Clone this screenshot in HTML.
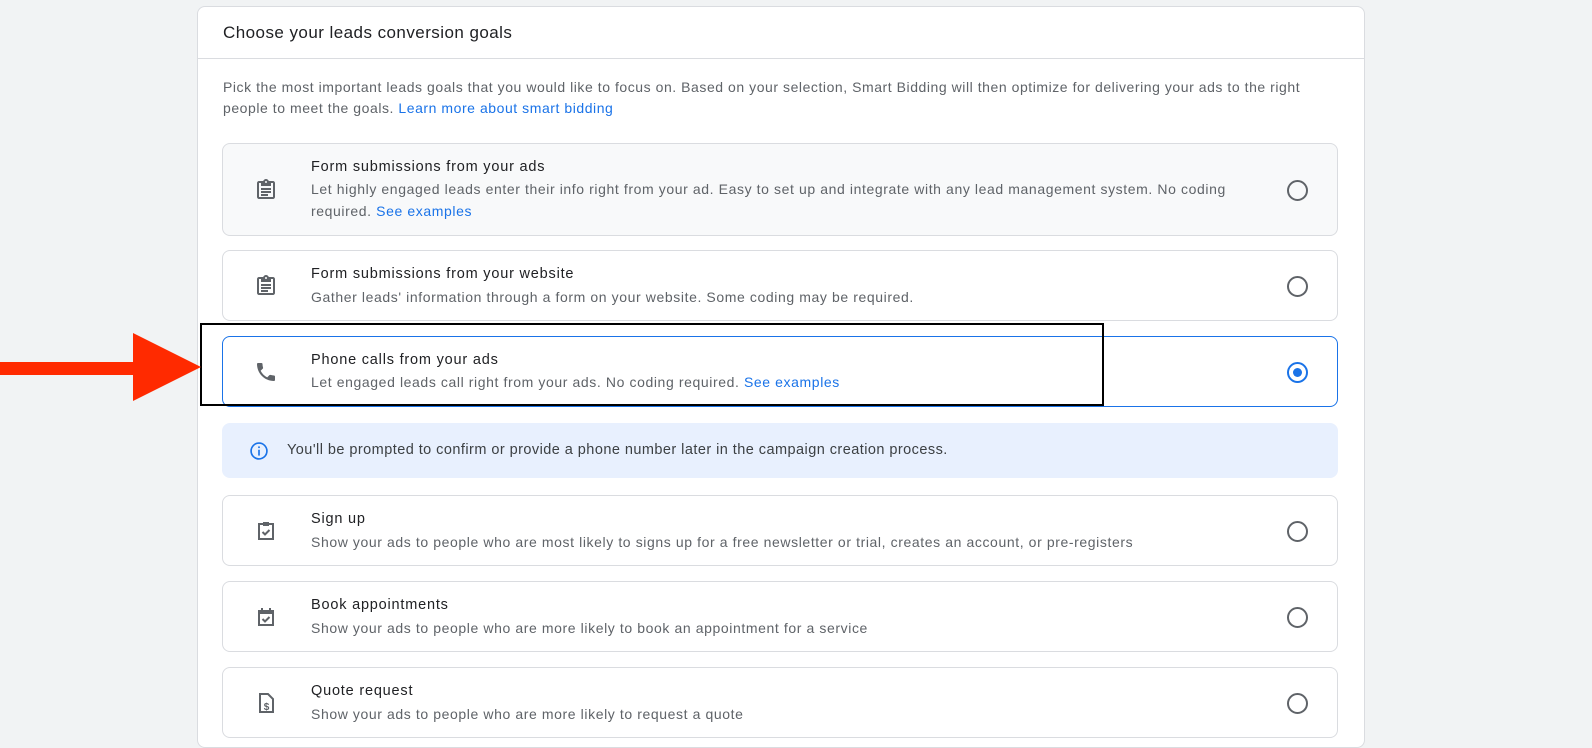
<!DOCTYPE html><html><head><style>
body{margin:0;width:1592px;height:723px;background:#f1f3f4;font-family:"Liberation Sans",Arial,sans-serif;position:relative;overflow:hidden}
.card{position:absolute;left:197px;top:6px;width:1166px;height:740px;background:#fff;border:1px solid #dadce0;border-radius:8px}
.hd{height:51px;border-bottom:1px solid #dadce0;font-size:17px;letter-spacing:0.45px;color:#202124;padding-left:25px;line-height:52px}
.intro{position:absolute;left:25px;top:70px;width:1110px;font-size:14px;letter-spacing:0.55px;line-height:21px;color:#5f6368}
a{color:#1a73e8}
.opt{position:absolute;left:222px;width:1114px;border:1px solid #dadce0;border-radius:8px;background:#fff}
.opt .ic{position:absolute;left:31px;top:50%;margin-top:-12px;width:24px;height:24px}
.opt .t{position:absolute;left:88px;font-size:14.5px;letter-spacing:0.8px;color:#202124}
.opt .d{position:absolute;left:88px;font-size:14px;letter-spacing:0.6px;color:#5f6368;line-height:22px;width:940px}
.rad{position:absolute;right:29px;top:50%;margin-top:-10px;width:17px;height:17px;border:2px solid #5f6368;border-radius:50%}
.lk{color:#1a73e8}
</style></head><body>
<div class="card"><div class="hd">Choose your leads conversion goals</div>
<div class="intro">Pick the most important leads goals that you would like to focus on. Based on your selection, Smart Bidding will then optimize for delivering your ads to the right people to meet the goals. <a>Learn more about smart bidding</a></div></div>

<div class="opt" style="top:143px;height:91px;background:#f8f9fa">
<svg class="ic" viewBox="0 0 24 24"><path fill="#5f6368" d="M19 3h-4.18C14.4 1.84 13.3 1 12 1s-2.4.84-2.82 2H5c-1.1 0-2 .9-2 2v14c0 1.1.9 2 2 2h14c1.1 0 2-.9 2-2V5c0-1.1-.9-2-2-2zm-7 0c.55 0 1 .45 1 1s-.45 1-1 1-1-.45-1-1 .45-1 1-1zm7 16H5V5h2v3h10V5h2v14zM7 10h10v2H7zm0 3h10v2H7zm0 3h7v2H7z"/></svg>
<div class="t" style="top:15px">Form submissions from your ads</div>
<div class="d" style="top:34px">Let highly engaged leads enter their info right from your ad. Easy to set up and integrate with any lead management system. No coding required. <span class="lk">See examples</span></div><div class="rad"></div></div>

<div class="opt" style="top:250px;height:69px">
<svg class="ic" viewBox="0 0 24 24"><path fill="#5f6368" d="M19 3h-4.18C14.4 1.84 13.3 1 12 1s-2.4.84-2.82 2H5c-1.1 0-2 .9-2 2v14c0 1.1.9 2 2 2h14c1.1 0 2-.9 2-2V5c0-1.1-.9-2-2-2zm-7 0c.55 0 1 .45 1 1s-.45 1-1 1-1-.45-1-1 .45-1 1-1zm7 16H5V5h2v3h10V5h2v14zM7 10h10v2H7zm0 3h10v2H7zm0 3h7v2H7z"/></svg>
<div class="t" style="top:15px">Form submissions from your website</div>
<div class="d" style="top:35px">Gather leads' information through a form on your website. Some coding may be required.</div><div class="rad"></div></div>

<div class="opt" style="top:336px;height:69px;border-color:#1a73e8">
<svg class="ic" viewBox="0 0 24 24"><path fill="#5f6368" d="M20 15.5c-1.25 0-2.45-.2-3.57-.57-.35-.11-.74-.03-1.02.24l-2.2 2.2c-2.83-1.44-5.15-3.75-6.59-6.59l2.2-2.21c.28-.26.36-.65.25-1C8.7 6.45 8.5 5.25 8.5 4c0-.55-.45-1-1-1H4c-.55 0-1 .45-1 1 0 9.39 7.61 17 17 17 .55 0 1-.45 1-1v-3.5c0-.55-.45-1-1-1z"/></svg>
<div class="t" style="top:15px">Phone calls from your ads</div>
<div class="d" style="top:34px">Let engaged leads call right from your ads. No coding required. <span class="lk">See examples</span></div>
<div class="rad" style="border-color:#1a73e8"><div style="width:9px;height:9px;border-radius:50%;background:#1a73e8;margin:4px"></div></div></div>

<div style="position:absolute;left:222px;top:423px;width:1116px;height:55px;background:#e8f0fe;border-radius:8px">
<svg style="position:absolute;left:27px;top:18px" width="20" height="20" viewBox="0 0 24 24"><circle cx="12" cy="12" r="9.5" fill="none" stroke="#1a73e8" stroke-width="2"/><rect x="11" y="10.5" width="2" height="7" fill="#1a73e8"/><rect x="11" y="6.5" width="2" height="2" fill="#1a73e8"/></svg>
<div style="position:absolute;left:65px;top:19px;font-size:14.5px;letter-spacing:0.45px;color:#3c4043">You'll be prompted to confirm or provide a phone number later in the campaign creation process.</div></div>

<div class="opt" style="top:495px;height:69px">
<svg class="ic" viewBox="0 0 24 24"><path fill="none" stroke="#5f6368" stroke-width="2" d="M5 5h14v15H5z"/><path fill="#5f6368" d="M9 3h6v4H9z"/><path fill="none" stroke="#5f6368" stroke-width="2" d="M8.5 13l2.5 2.5 4.5-4.5"/></svg>
<div class="t" style="top:15px">Sign up</div>
<div class="d" style="top:35px">Show your ads to people who are most likely to signs up for a free newsletter or trial, creates an account, or pre-registers</div><div class="rad"></div></div>

<div class="opt" style="top:581px;height:69px">
<svg class="ic" viewBox="0 0 24 24"><path fill="none" stroke="#5f6368" stroke-width="2" d="M5 6h14v14H5z"/><path fill="#5f6368" d="M4 5h16v4H4zM7 3h2v3H7zm8 0h2v3h-2z"/><path fill="none" stroke="#5f6368" stroke-width="2" d="M8.5 14l2.5 2.5 4.5-4.5"/></svg>
<div class="t" style="top:15px">Book appointments</div>
<div class="d" style="top:35px">Show your ads to people who are more likely to book an appointment for a service</div><div class="rad"></div></div>

<div class="opt" style="top:667px;height:69px">
<svg class="ic" viewBox="0 0 24 24"><path fill="none" stroke="#5f6368" stroke-width="2" d="M6 3h8l5 5v13H6z"/><text x="12.5" y="19" font-size="10" font-weight="bold" text-anchor="middle" fill="#5f6368" font-family="Liberation Sans">$</text></svg>
<div class="t" style="top:15px">Quote request</div>
<div class="d" style="top:35px">Show your ads to people who are more likely to request a quote</div><div class="rad"></div></div>

<div style="position:absolute;left:200px;top:323px;width:900px;height:79px;border:2px solid #000"></div>
<svg style="position:absolute;left:0;top:320px" width="205" height="90"><rect x="0" y="42" width="136" height="13" fill="#ff2a00"/><polygon points="133,13 201,47 133,81" fill="#ff2a00"/></svg>
</body></html>
